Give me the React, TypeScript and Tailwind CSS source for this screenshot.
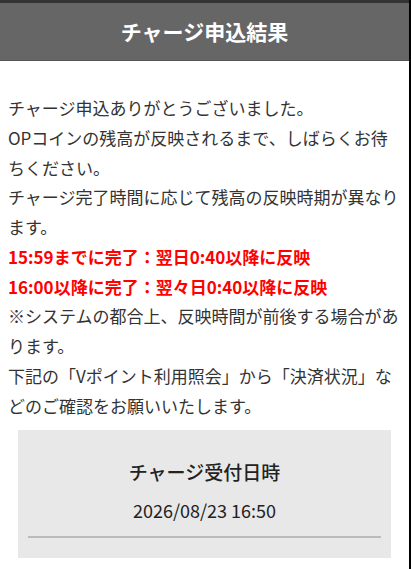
import React from "react";

const jp = { fontFamily: '"Noto Sans CJK JP", "Noto Sans", sans-serif' };

export default function App() {
  return (
    <div className="w-[411px] min-h-[569px] bg-white border-r-2 border-black" style={jp}>
      <div className="h-[3px] bg-[#333333]" />
      <div className="h-[58px] bg-[#666666] border-b border-[#555555] flex items-center justify-center">
        <h1 className="text-white text-[21px] font-bold leading-none">チャージ申込結果</h1>
      </div>
      <div className="pt-[32px] pl-[8px] text-[17px] leading-[29.75px] text-[#333333] whitespace-nowrap">
        <p>
          チャージ申込ありがとうございました。
          <br />
          OPコインの残高が反映されるまで、しばらくお待
          <br />
          ちください。
          <br />
          チャージ完了時間に応じて残高の反映時期が異なり
          <br />
          ます。
        </p>
        <p className="text-[#ff0000] font-bold">
          15:59までに完了：翌日0:40以降に反映
          <br />
          16:00以降に完了：翌々日0:40以降に反映
        </p>
        <p>
          ※システムの都合上、反映時間が前後する場合があ
          <br />
          ります。
          <br />
          下記の「Vポイント利用照会」から「決済状況」な
          <br />
          どのご確認をお願いいたします。
        </p>
      </div>
      <div className="mx-[18px] mt-[10px] bg-[#e8e8e8] pt-[28px] pb-[20px] px-[10px] text-center text-[#222222]">
        <div className="text-[19px] leading-[28px] font-medium">チャージ受付日時</div>
        <div className="mt-[11px] text-[18px] leading-[26px]">2026/08/23 16:50</div>
        <div className="mt-[13px] h-[2px] bg-[#bbbbbb]" />
      </div>
    </div>
  );
}
